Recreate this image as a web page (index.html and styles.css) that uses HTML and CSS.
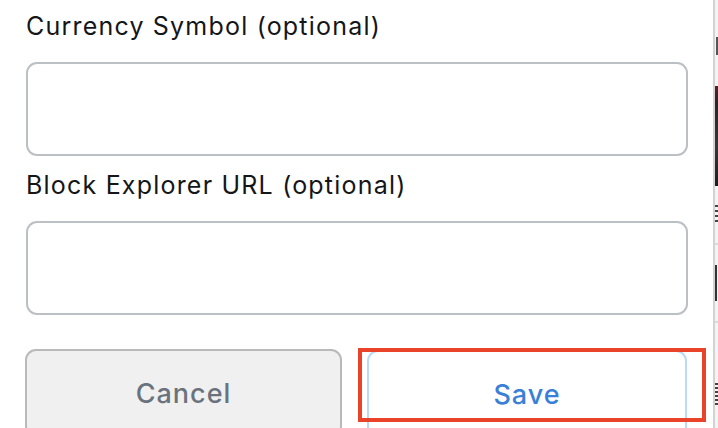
FILE: index.html
```html
<!DOCTYPE html>
<html lang="en">
<head>
<meta charset="utf-8">
<title>Network settings</title>
<link rel="stylesheet" href="styles.css">
</head>
<body>
<div class="page">
  <main class="panel">
    <div class="field">
      <label class="label" for="sym">Currency Symbol (optional)</label>
      <input class="input" id="sym" type="text">
    </div>
    <div class="field">
      <label class="label" for="url">Block Explorer URL (optional)</label>
      <input class="input" id="url" type="text">
    </div>
    <div class="actions">
      <button class="btn btn-cancel" type="button">Cancel</button>
      <div class="save-wrap">
        <button class="btn btn-save" type="button">Save</button>
        <span class="highlight"></span>
      </div>
    </div>
  </main>
  <aside class="strip">
    <div class="s-gap1"></div>
    <div class="s-text s-t1"></div>
    <div class="s-gap2"></div>
    <div class="s-img"></div>
    <div class="s-gap3"></div>
    <div class="s-text s-t2"></div>
    <div class="s-line s-l1"></div>
    <div class="s-text s-t3"></div>
    <div class="s-line s-l2"></div>
    <div class="s-text s-t4"></div>
  </aside>
</div>
</body>
</html>
```
FILE: styles.css
```css
* { box-sizing: border-box; }
html, body {
  margin: 0;
  padding: 0;
  background: #ffffff;
  overflow: hidden;
}
body {
  font-family: Inter, "Noto Sans", "Liberation Sans", sans-serif;
  color: #24272a;
}
.page {
  display: flex;
  width: 718px;
  height: 428px;
  overflow: hidden;
}
.panel {
  width: 713px;
  flex: none;
  padding: 12px 25px 0 26px;
  display: flex;
  flex-direction: column;
}
.field {
  display: flex;
  flex-direction: column;
  margin-bottom: 15px;
}
.label {
  font-size: 25px;
  line-height: 28px;
  font-weight: 400;
  letter-spacing: 1.2px;
  color: #141618;
  margin-bottom: 22px;
}
.input {
  height: 94px;
  width: 662px;
  border: 2px solid #bbc0c5;
  border-radius: 11px;
  background: #fff;
  font: inherit;
  outline: none;
}
.actions {
  display: flex;
  gap: 25px;
  margin-top: 19px;
  width: 662px;
  margin-left: -1px;
}
.btn {
  height: 88px;
  border-radius: 11px;
  font-family: inherit;
  font-size: 27px;
  font-weight: 500;
  letter-spacing: 1px;
  display: flex;
  align-items: center;
  justify-content: center;
}
.btn-cancel {
  width: 320px;
  background: #f0f0f0;
  border: 2px solid #b9b9b9;
  color: #6a737d;
}
.save-wrap {
  position: relative;
  width: 320px;
}
.btn-save {
  width: 320px;
  background: #fff;
  border: 2px solid #bcd9f4;
  color: #3a7fd8;
  margin-top: 1px;
}
.highlight {
  position: absolute;
  left: -9px;
  top: -1px;
  width: 348px;
  height: 74px;
  border: 4px solid #e9442a;
  pointer-events: none;
}
.strip {
  flex: 1;
  border-left: 2px solid #d2d2d2;
  background: #f4f4f4;
  display: flex;
  flex-direction: column;
}
.s-gap1 { height: 37px; }
.s-t1 { height: 18px; margin-left: 1px; width: 2px; background: #555; }
.s-gap2 { height: 31px; }
.s-img {
  height: 100px;
  background: linear-gradient(#5a1e26 0, #2c2326 18px, #3a3638 60px, #1f1c1e 100px);
}
.s-gap3 { height: 19px; }
.s-t2 { height: 20px; width: 3px; background: repeating-linear-gradient(#444 0 2px, transparent 2px 5px); }
.s-line { height: 2px; background: #dcdcdc; }
.s-l1 { margin-top: 18px; }
.s-t3 { height: 36px; margin-top: 20px; width: 2px; background: #333; }
.s-l2 { margin-top: 20px; }
.s-t4 { height: 24px; margin-top: 60px; width: 3px; background: repeating-linear-gradient(#444 0 2px, transparent 2px 4px); }
```
